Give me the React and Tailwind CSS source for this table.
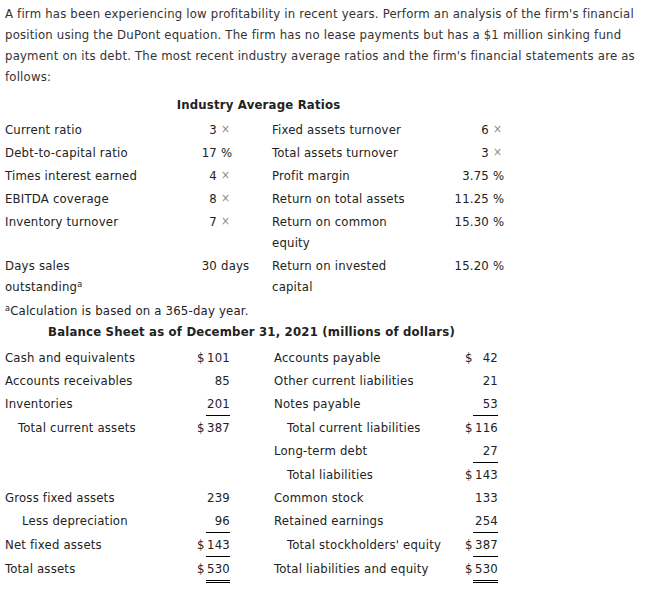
import React from "react";

const FONT = "font-['DejaVu_Sans_Condensed','DejaVu_Sans',sans-serif]";

const RATIOS = [
  ["Current ratio", "3", "×", "Fixed assets turnover", "6", "×"],
  ["Debt-to-capital ratio", "17", "%", "Total assets turnover", "3", "×"],
  ["Times interest earned", "4", "×", "Profit margin", "3.75", "%"],
  ["EBITDA coverage", "8", "×", "Return on total assets", "11.25", "%"],
  ["Inventory turnover", "7", "×", "Return on common equity", "15.30", "%"],
  [<>Days sales outstanding<sup className="text-[9px]">a</sup></>, "30", "days", "Return on invested capital", "15.20", "%"],
];

// [label, indent, $, value, underline] for each side
const BALANCE = [
  [["Cash and equivalents", 0, "$", "101", ""], ["Accounts payable", 0, "$", "42", ""]],
  [["Accounts receivables", 0, "", "85", ""], ["Other current liabilities", 0, "", "21", ""]],
  [["Inventories", 0, "", "201", "single"], ["Notes payable", 0, "", "53", "single"]],
  [["Total current assets", 13, "$", "387", ""], ["Total current liabilities", 13, "$", "116", ""]],
  [["", 0, "", "", ""], ["Long-term debt", 0, "", "27", "single"]],
  [["", 0, "", "", ""], ["Total liabilities", 13, "$", "143", ""]],
  [["Gross fixed assets", 0, "", "239", ""], ["Common stock", 0, "", "133", ""]],
  [["Less depreciation", 17, "", "96", "single"], ["Retained earnings", 0, "", "254", "single"]],
  [["Net fixed assets", 0, "$", "143", "single"], ["Total stockholders' equity", 13, "$", "387", "single"]],
  [["Total assets", 0, "$", "530", "double"], ["Total liabilities and equity", 0, "$", "530", "double"]],
];

const unitCls = (u) => (u === "×" ? "text-[#8a8a8a] text-[12px]" : "");

const BalanceCells = ({ side }) => {
  const [label, indent, dollar, value, line] = side;
  const border =
    line === "single"
      ? "border-b border-black"
      : line === "double"
      ? "border-b-[3px] border-double border-black"
      : "";
  return (
    <>
      <td className="py-px align-top whitespace-nowrap" style={{ paddingLeft: indent }}>{label}</td>
      <td className="py-px pl-[2px] align-top">{dollar}</td>
      <td className={`py-px text-right align-top ${border}`}>{value}</td>
    </>
  );
};

export default function App() {
  return (
    <div className={`${FONT} text-[13px] tracking-[0.2px] leading-[21px] text-[#222] bg-white pl-[5px] pt-[3px] min-h-[592px]`}>
      <p className="w-[650px] text-[#333]">
        A firm has been experiencing low profitability in recent years. Perform an analysis of the firm's financial
        position using the DuPont equation. The firm has no lease payments but has a $1 million sinking fund
        payment on its debt. The most recent industry average ratios and the firm's financial statements are as
        follows:
      </p>

      <div className="w-[507px] mt-[7px] text-center font-bold">Industry Average Ratios</div>
      <table className="table-fixed border-collapse mt-[3px] w-[507px]">
        <colgroup>
          <col className="w-[135px]" />
          <col className="w-[77px]" />
          <col className="w-[55px]" />
          <col className="w-[140px]" />
          <col className="w-[77px]" />
          <col className="w-[23px]" />
        </colgroup>
        <tbody>
          {RATIOS.map((r, i) => (
            <tr key={i}>
              <td className="py-px align-top">{r[0]}</td>
              <td className="py-px align-top text-right">{r[1]}</td>
              <td className={`py-px pl-[4px] align-top whitespace-nowrap ${unitCls(r[2])}`}>{r[2]}</td>
              <td className="py-px align-top">{r[3]}</td>
              <td className="py-px align-top text-right">{r[4]}</td>
              <td className={`py-px pl-[4px] align-top ${unitCls(r[5])}`}>{r[5]}</td>
            </tr>
          ))}
        </tbody>
      </table>
      <div className="mt-[2px]">
        <sup className="text-[9px]">a</sup>Calculation is based on a 365-day year.
      </div>

      <div className="w-[493px] font-bold text-center">Balance Sheet as of December 31, 2021 (millions of dollars)</div>
      <table className="table-fixed border-collapse mt-[4px] w-[493px]">
        <colgroup>
          <col className="w-[190px]" />
          <col className="w-[11px]" />
          <col className="w-[24px]" />
          <col className="w-[44px]" />
          <col className="w-[189px]" />
          <col className="w-[10px]" />
          <col className="w-[25px]" />
        </colgroup>
        <tbody>
          {BALANCE.map((row, i) => (
            <tr key={i}>
              <BalanceCells side={row[0]} />
              <td />
              <BalanceCells side={row[1]} />
            </tr>
          ))}
        </tbody>
      </table>
    </div>
  );
}
